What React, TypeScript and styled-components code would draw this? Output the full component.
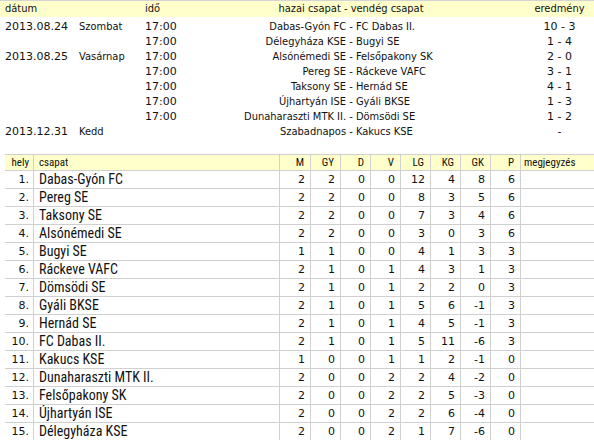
import React from "react";
import styled, { createGlobalStyle } from "styled-components";

const GlobalStyle = createGlobalStyle`
  html, body { margin: 0; padding: 0; background: #fff; }
  body { font-family: "DejaVu Sans", Verdana, sans-serif; color: #111; }
`;

const VERDANA = `"DejaVu Sans", Verdana, sans-serif`;
const TAHOMA = `"DejaVu Sans Condensed", "DejaVu Sans", Tahoma, sans-serif`;
const NARROW = `Roboto, "Liberation Sans", Arial, sans-serif`;

const Page = styled.div`
  width: 594px;
  height: 440px;
  overflow: hidden;
`;

/* ---------- schedule ---------- */

const Schedule = styled.div`
  display: flex;
  flex-direction: column;
  padding-bottom: 15px;
`;

const schedCols = "74px 66px 37px 348px 69px";

const SchedHead = styled.div`
  display: grid;
  grid-template-columns: ${schedCols};
  height: 16px;
  line-height: 16px;
  border-top: 1px solid #d4d4d4;
  background: #ffffcc;
  font-family: ${TAHOMA};
  font-stretch: condensed;
  font-size: 11px;
  margin-bottom: 2px;
`;

const SchedRow = styled.div`
  display: grid;
  grid-template-columns: ${schedCols};
  height: 15px;
  line-height: 15px;
  font-size: 11px;
`;

const Cell = styled.div<{ $align?: "left" | "center" | "right"; $narrow?: boolean }>`
  padding: 0 5px;
  white-space: nowrap;
  overflow: hidden;
  text-align: ${(p) => p.$align ?? "left"};
  font-family: ${(p) => (p.$narrow ? TAHOMA : VERDANA)};
  font-stretch: ${(p) => (p.$narrow ? "condensed" : "normal")};
`;

const Match = styled.div`
  display: grid;
  grid-template-columns: 1fr auto 1fr;
  font-family: ${TAHOMA};
  font-stretch: condensed;
  white-space: nowrap;
`;

const Home = styled.span`
  text-align: right;
`;

const Sep = styled.span`
  white-space: pre;
`;

const Away = styled.span`
  text-align: left;
`;

/* ---------- standings ---------- */

const Standings = styled.div`
  margin-left: 5px;
  display: flex;
  flex-direction: column;
`;

const standCols = "28px 246px 31px repeat(7, 30px) 74px";

const StandHead = styled.div`
  display: grid;
  grid-template-columns: ${standCols};
  height: 15px;
  line-height: 15px;
  border-top: 1px solid #d0d0d0;
  border-bottom: 1px solid #d0d0d0;
  background: #ffffcc;
  font-family: ${NARROW};
  font-stretch: 80%;
  font-size: 11px;
  font-weight: 400;
`;

const StandRow = styled.div`
  display: grid;
  grid-template-columns: ${standCols};
  height: 17px;
  line-height: 17px;
  border-bottom: 1px solid #d0d0d0;
`;

const SCell = styled.div<{ $align?: "left" | "right"; $first?: boolean; $pad?: number }>`
  box-sizing: border-box;
  border-left: ${(p) => (p.$first ? "none" : "1px solid #d0d0d0")};
  padding: ${(p) => (p.$align === "right" ? `0 ${p.$pad ?? 5}px 0 0` : `0 0 0 ${p.$pad ?? 5}px`)};
  text-align: ${(p) => p.$align ?? "left"};
  white-space: nowrap;
  overflow: hidden;
`;

const Num = styled(SCell)`
  font-family: ${VERDANA};
  font-size: 11px;
`;

const Team = styled(SCell)`
  font-family: ${NARROW};
  font-stretch: 87%;
  font-weight: 400;
  font-size: 14px;
`;

type Game = { date?: string; day?: string; time: string; home: string; away: string; result: string };

const games: Game[] = [
  { date: "2013.08.24", day: "Szombat", time: "17:00", home: "Dabas-Gyón FC", away: "FC Dabas II.", result: "10 - 3" },
  { time: "17:00", home: "Délegyháza KSE", away: "Bugyi SE", result: "1 - 4" },
  { date: "2013.08.25", day: "Vasárnap", time: "17:00", home: "Alsónémedi SE", away: "Felsőpakony SK", result: "2 - 0" },
  { time: "17:00", home: "Pereg SE", away: "Ráckeve VAFC", result: "3 - 1" },
  { time: "17:00", home: "Taksony SE", away: "Hernád SE", result: "4 - 1" },
  { time: "17:00", home: "Újhartyán ISE", away: "Gyáli BKSE", result: "1 - 3" },
  { time: "17:00", home: "Dunaharaszti MTK II.", away: "Dömsödi SE", result: "1 - 2" },
  { date: "2013.12.31", day: "Kedd", time: "", home: "Szabadnapos", away: "Kakucs KSE", result: "-" },
];

type Row = [string, number, number, number, number, number, number, number, number];

const table: Row[] = [
  ["Dabas-Gyón FC", 2, 2, 0, 0, 12, 4, 8, 6],
  ["Pereg SE", 2, 2, 0, 0, 8, 3, 5, 6],
  ["Taksony SE", 2, 2, 0, 0, 7, 3, 4, 6],
  ["Alsónémedi SE", 2, 2, 0, 0, 3, 0, 3, 6],
  ["Bugyi SE", 1, 1, 0, 0, 4, 1, 3, 3],
  ["Ráckeve VAFC", 2, 1, 0, 1, 4, 3, 1, 3],
  ["Dömsödi SE", 2, 1, 0, 1, 2, 2, 0, 3],
  ["Gyáli BKSE", 2, 1, 0, 1, 5, 6, -1, 3],
  ["Hernád SE", 2, 1, 0, 1, 4, 5, -1, 3],
  ["FC Dabas II.", 2, 1, 0, 1, 5, 11, -6, 3],
  ["Kakucs KSE", 1, 0, 0, 1, 1, 2, -1, 0],
  ["Dunaharaszti MTK II.", 2, 0, 0, 2, 2, 4, -2, 0],
  ["Felsőpakony SK", 2, 0, 0, 2, 2, 5, -3, 0],
  ["Újhartyán ISE", 2, 0, 0, 2, 2, 6, -4, 0],
  ["Délegyháza KSE", 2, 0, 0, 2, 1, 7, -6, 0],
];

const numHeads = ["M", "GY", "D", "V", "LG", "KG", "GK", "P"];

export default function App() {
  return (
    <Page>
      <GlobalStyle />
      <Schedule>
        <SchedHead>
          <Cell $narrow>dátum</Cell>
          <Cell $narrow></Cell>
          <Cell $narrow>idő</Cell>
          <Cell $narrow $align="center">hazai csapat - vendég csapat</Cell>
          <Cell $narrow $align="center">eredmény</Cell>
        </SchedHead>
        {games.map((g, i) => (
          <SchedRow key={i}>
            <Cell>{g.date ?? ""}</Cell>
            <Cell $narrow>{g.day ?? ""}</Cell>
            <Cell>{g.time}</Cell>
            <Match>
              <Home>{g.home}</Home>
              <Sep> - </Sep>
              <Away>{g.away}</Away>
            </Match>
            <Cell $align="center">{g.result}</Cell>
          </SchedRow>
        ))}
      </Schedule>
      <Standings>
        <StandHead>
          <SCell $first $align="right" $pad={4}>hely</SCell>
          <SCell $pad={5}>csapat</SCell>
          {numHeads.map((h) => (
            <SCell key={h} $align="right" $pad={6}>{h}</SCell>
          ))}
          <SCell $pad={3}>megjegyzés</SCell>
        </StandHead>
        {table.map((r, i) => (
          <StandRow key={i}>
            <Num $first $align="right" $pad={4}>{i + 1}.</Num>
            <Team $pad={5}>{r[0]}</Team>
            {r.slice(1).map((v, j) => (
              <Num key={j} $align="right" $pad={5}>{v}</Num>
            ))}
            <Num></Num>
          </StandRow>
        ))}
      </Standings>
    </Page>
  );
}
